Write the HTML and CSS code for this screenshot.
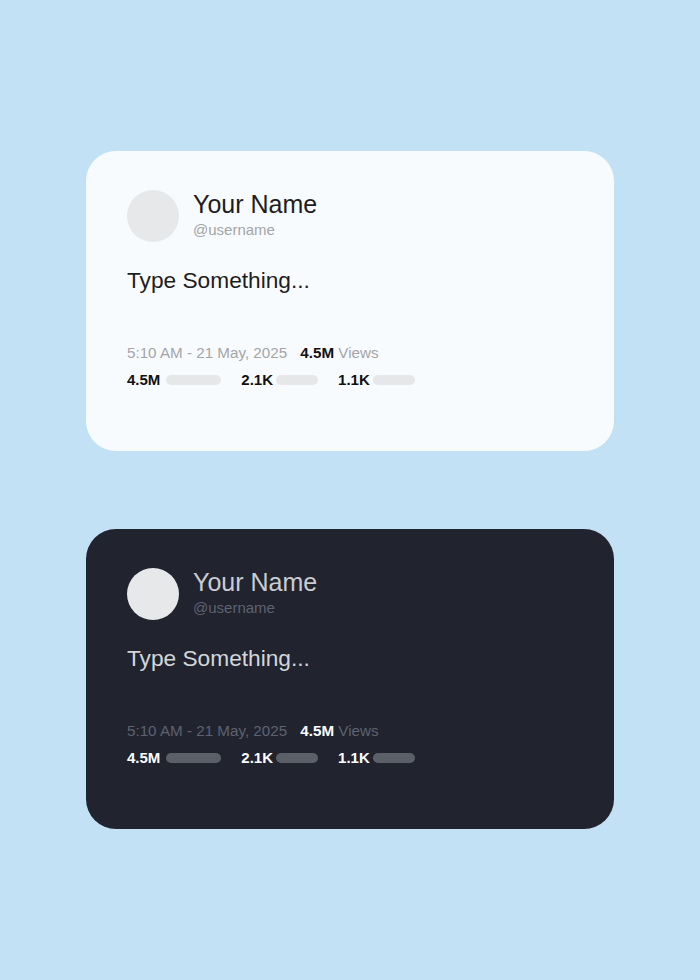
FILE: index.html
```html
<!DOCTYPE html>
<html lang="en">
<head>
    <meta charset="UTF-8">
    <meta name="viewport" content="width=device-width, initial-scale=1.0">
    <title>Post Cards</title>
    <link rel="stylesheet" href="styles.css">
</head>
<body>

    <div class="stack">
        <!-- Light post -->
        <div class="post light">
            <div class="post-head">
                <div class="avatar"></div>
                <div class="who">
                    <div class="name">Your Name</div>
                    <div class="handle">@username</div>
                </div>
            </div>
            <p class="post-text">Type Something...</p>
            <div class="meta">5:10 AM - 21 May, 2025 <b>4.5M</b> Views</div>
            <div class="stats">
                <span class="stat"><b>4.5M</b><i class="bar wide"></i></span>
                <span class="stat"><b>2.1K</b><i class="bar"></i></span>
                <span class="stat"><b>1.1K</b><i class="bar"></i></span>
            </div>
        </div>

        <!-- Dark post -->
        <div class="post dark">
            <div class="post-head">
                <div class="avatar"></div>
                <div class="who">
                    <div class="name">Your Name</div>
                    <div class="handle">@username</div>
                </div>
            </div>
            <p class="post-text">Type Something...</p>
            <div class="meta">5:10 AM - 21 May, 2025 <b>4.5M</b> Views</div>
            <div class="stats">
                <span class="stat"><b>4.5M</b><i class="bar wide"></i></span>
                <span class="stat"><b>2.1K</b><i class="bar"></i></span>
                <span class="stat"><b>1.1K</b><i class="bar"></i></span>
            </div>
        </div>
    </div>

</body>
</html>
```

FILE: styles.css
```css
/* Page */
body, html {
    margin: 0;
    padding: 0;
    height: 100%;
    background-color: #c3e1f5;
    font-family: "Liberation Sans", Arial, sans-serif;
}

.stack {
    display: flex;
    flex-direction: column;
    gap: 78px;
    padding: 151px 0 0 86px;
}

/* --- Post card --- */
.post {
    width: 528px;
    height: 300px;
    box-sizing: border-box;
    padding: 39px 41px 0 41px;
    border-radius: 30px;
}

.post-head {
    display: flex;
    align-items: center;
    gap: 14px;
}

.avatar {
    width: 52px;
    height: 52px;
    border-radius: 50%;
    background-color: #e7e8ea;
}

.who {
    margin-top: -4px;
}

.name {
    font-size: 25px;
    line-height: 30px;
}

.handle {
    font-size: 15px;
    line-height: 18px;
    margin-top: 2px;
}

.post-text {
    margin: 25px 0 0 0;
    font-size: 22.7px;
    line-height: 27px;
}

.meta {
    margin-top: 50px;
    font-size: 15.2px;
    line-height: 18px;
}
.meta b {
    margin-left: 9px;
}

.stats {
    display: flex;
    gap: 20px;
    margin-top: 9px;
    font-size: 15px;
    line-height: 18px;
}

.stat {
    display: flex;
    align-items: center;
    gap: 3px;
}

.bar {
    display: inline-block;
    width: 42px;
    height: 10px;
    border-radius: 5px;
}
.bar.wide {
    width: 55px;
    margin-left: 3px;
}

/* Light theme */
.light {
    background-color: #f8fbfe;
    color: #1d1d1f;
}
.light .handle,
.light .meta { color: #a3a5a8; }
.light .meta b { color: #111; }
.light .stat b { color: #111; }
.light .bar { background-color: #e6e7e9; }

/* Dark theme */
.dark {
    background-color: #21242f;
    color: #d4d6da;
}
.dark .name { color: #c9ccd1; }
.dark .handle,
.dark .meta { color: #5d6270; }
.dark .meta b { color: #fff; }
.dark .stat b { color: #fff; }
.dark .bar { background-color: #5b6068; }
```
